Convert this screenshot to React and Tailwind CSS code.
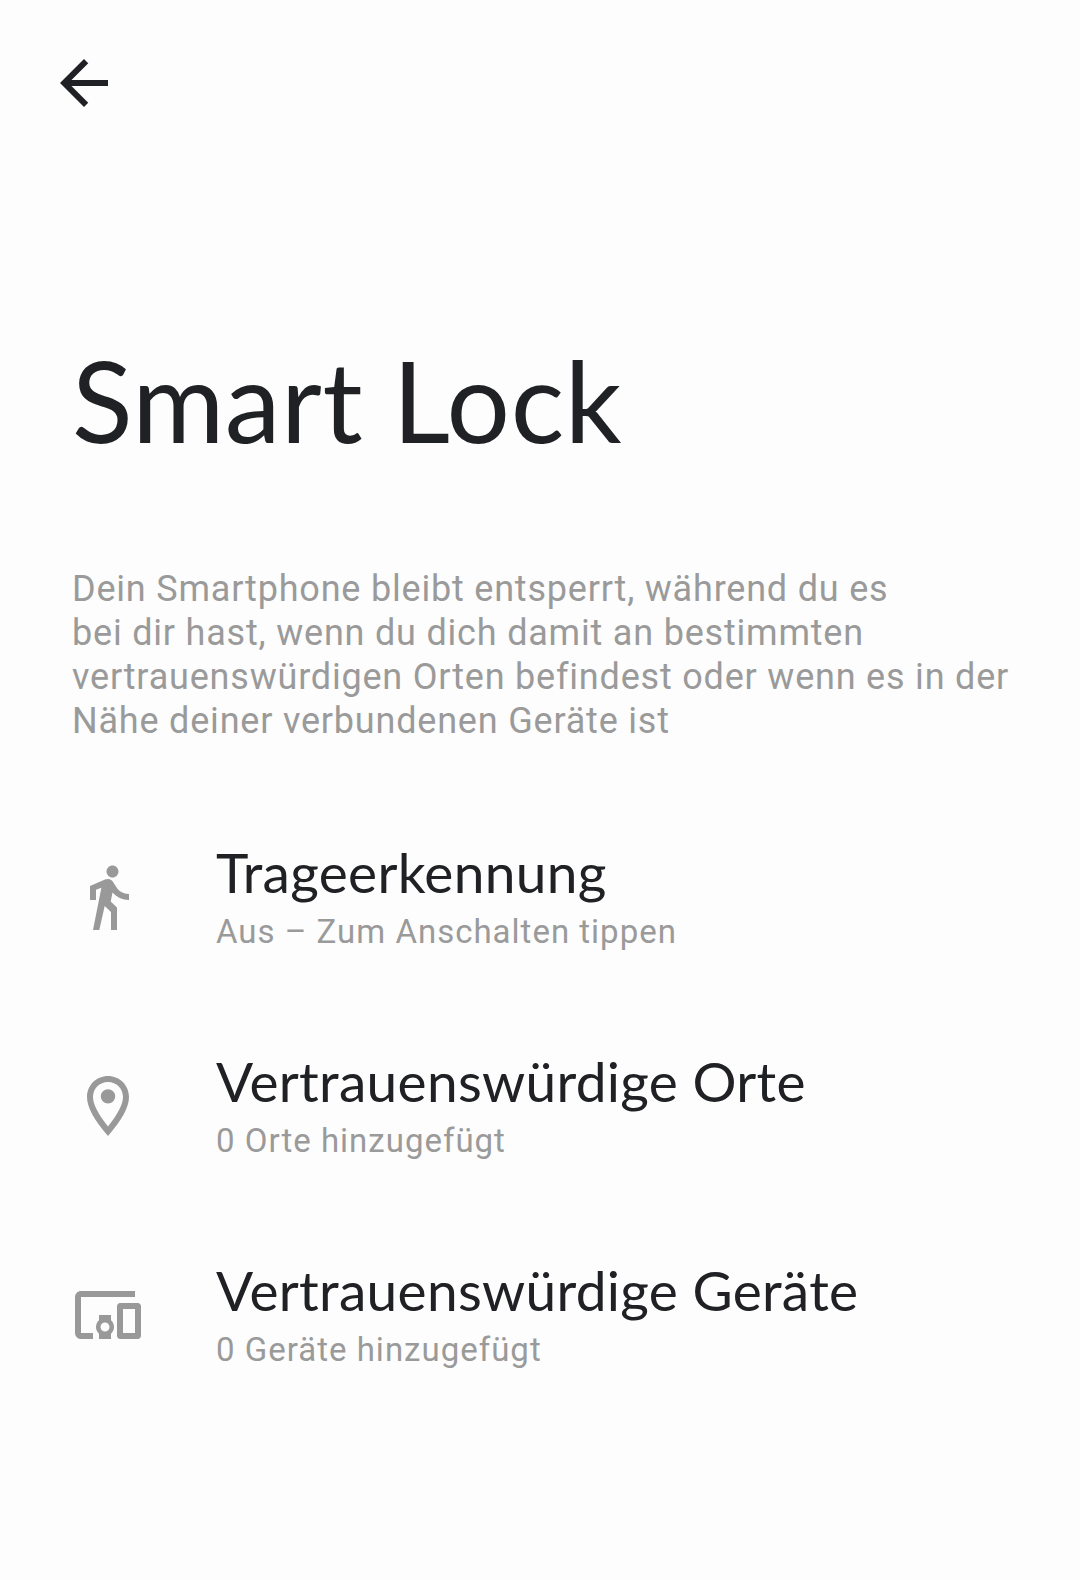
const rows = [
  {
    title: 'Trageerkennung',
    sub: 'Aus – Zum Anschalten tippen',
    icon: 'M13.5 5.5c1.1 0 2-.9 2-2s-.9-2-2-2-2 .9-2 2 .9 2 2 2zM9.8 8.9L7 23h2.1l1.8-8 2.1 2v6h2v-7.5l-2.1-2 .6-3C14.8 12 16.8 13 19 13v-2c-1.9 0-3.5-1-4.3-2.4l-1-1.6c-.4-.6-1-1-1.7-1-.3 0-.5.1-.8.1L6 8.3V13h2V9.6l1.8-.7',
  },
  {
    title: 'Vertrauenswürdige Orte',
    sub: '0 Orte hinzugefügt',
    icon: 'M12 2C8.1 2 5 5.1 5 9c0 3.4 2.3 7.6 7 13 4.7-5.4 7-9.6 7-13 0-3.9-3.1-7-7-7zm0 2c2.8 0 5 2.2 5 5 0 2.4-1.6 5.5-5 9.8C8.6 14.5 7 11.400 7 9c0-2.800 2.200-5 5-5zm0 2.400a2.400 2.400 0 1 0 0 4.800 2.400 2.400 0 0 0 0-4.800z',
  },
  {
    title: 'Vertrauenswürdige Geräte',
    sub: '0 Geräte hinzugefügt',
    icon: 'M3 6h18V4H3c-1.1 0-2 .9-2 2v12c0 1.1.9 2 2 2h4v-2H3V6zm10 6H9v1.78c-.61.55-1 1.33-1 2.22s.39 1.67 1 2.22V20h4v-1.78c.61-.55 1-1.34 1-2.22s-.39-1.67-1-2.22V12zm-2 5.5c-.83 0-1.5-.67-1.5-1.5s.67-1.5 1.5-1.5 1.5.67 1.5 1.5-.67 1.5-1.5 1.5zM22 8h-6c-.5 0-1 .5-1 1v10c0 .5.5 1 1 1h6c.5 0 1-.5 1-1V9c0-.5-.5-1-1-1zm-1 10h-4v-8h4v8z',
  },
];

const App = () => {
  return (
    <div className="w-[1080px] h-[1580px] bg-[#fdfdfd] overflow-hidden font-['Roboto',sans-serif]">
      {/* Back arrow */}
      <div className="pt-[47px] pl-[48px]">
        <svg width="72" height="72" viewBox="0 0 24 24" fill="#202124">
          <path d="M20 11H7.83l5.59-5.59L12 4l-8 8 8 8 1.41-1.41L7.83 13H20v-2z" />
        </svg>
      </div>

      <h1 className="mt-[214px] ml-[72px] text-[112px] leading-[134px] font-normal tracking-[0.6px] text-[#202124] font-['Lato',sans-serif]">
        Smart Lock
      </h1>

      <p className="mt-[100px] ml-[72px] w-[960px] text-[36px] leading-[44px] tracking-[0.8px] text-[#9a9a9a]">
        Dein Smartphone bleibt entsperrt, während du es
        <br />
        bei dir hast, wenn du dich damit an bestimmten
        <br />
        vertrauenswürdigen Orten befindest oder wenn es in der
        <br />
        Nähe deiner verbundenen Geräte ist
      </p>

      <div className="mt-[49px] flex flex-col">
        {rows.map((row) => (
          <div key={row.title} className="h-[209px] flex items-center pl-[72px]">
            <svg width="72" height="72" viewBox="0 0 24 24" fill="#999999" className="shrink-0">
              <path d={row.icon} fillRule="evenodd" />
            </svg>
            <div className="ml-[72px]">
              <div className="text-[55px] leading-[66px] tracking-[0.3px] mb-[4px] text-[#202124] font-['Lato',sans-serif]">{row.title}</div>
              <div className="text-[33px] leading-[46px] tracking-[1px] text-[#9a9a9a]">{row.sub}</div>
            </div>
          </div>
        ))}
      </div>
    </div>
  );
};

export default App;
